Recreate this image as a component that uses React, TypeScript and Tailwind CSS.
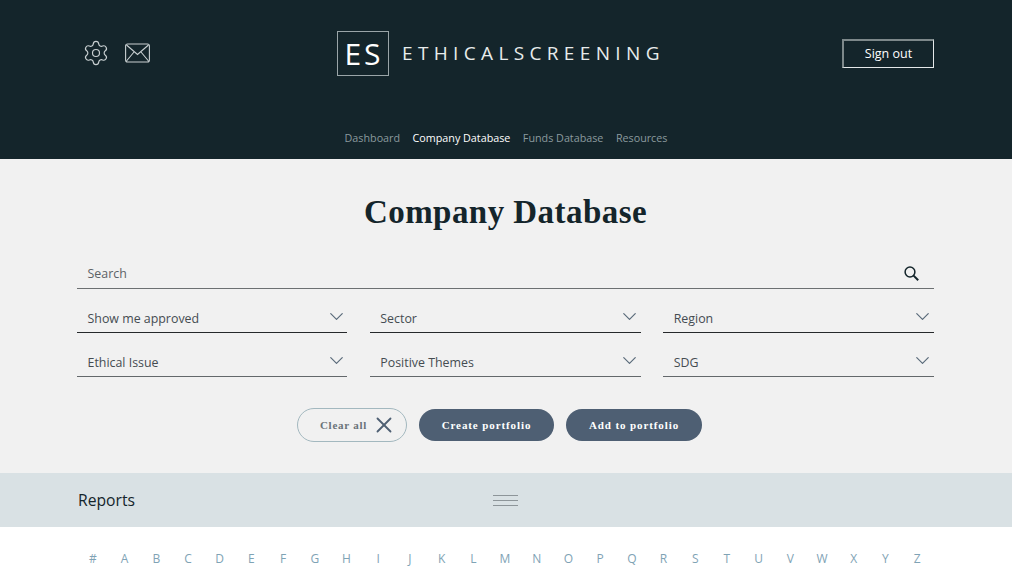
import { ChevronDown, Settings, X } from "lucide-react";

const LETTERS = "#ABCDEFGHIJKLMNOPQRSTUVWXYZ".split("");

const FILTERS = ["Show me approved", "Sector", "Region", "Ethical Issue", "Positive Themes", "SDG"];

const NAV = ["Dashboard", "Company Database", "Funds Database", "Resources"];

function MailIcon() {
  return (
    <svg width="25" height="20" viewBox="0 0 25 20" fill="none" stroke="#c9d0d2" strokeWidth="1.1">
      <rect x="0.6" y="1" width="23.8" height="18" rx="2" />
      <path d="M1.5 2l11 9.5L23.5 2M1.5 18l7.5-9M23.5 18l-7.5-9" />
    </svg>
  );
}

function SearchIcon() {
  return (
    <svg width="15" height="15" viewBox="0 0 15 15" fill="none" stroke="#14252b" className="-mt-[2px]">
      <circle cx="6" cy="6" r="4.9" strokeWidth="1.5" />
      <path d="M9.6 9.6L14.2 14.2" strokeWidth="2" />
    </svg>
  );
}

function Header() {
  return (
    <header className="h-[159px] bg-[#14252b] flex flex-col">
      <div className="relative flex items-start justify-between pl-[82px] pr-[78px] pt-[31px]">
        <div className="flex items-center gap-[15px] mt-[8px]">
          <Settings className="w-[28px] h-[28px] text-[#c9d0d2]" strokeWidth={1} />
          <MailIcon />
        </div>
        <div className="absolute left-[337px] top-[31px] flex items-center">
          <div className="w-[52px] h-[45px] border border-[#9aa5a8] flex items-center justify-center text-white text-[30px] tracking-[3px] pl-[2px] font-['Open_Sans',sans-serif]">
            ES
          </div>
          <span className="ml-[13px] text-[#e8ecec] text-[19px] tracking-[5.35px] font-['Open_Sans',sans-serif]">
            ETHICALSCREENING
          </span>
        </div>
        <button className="w-[92px] h-[29px] mt-[8px] border-t-2 border-l-2 border-r border-b border-t-[#7d888a] border-l-[#7d888a] border-r-[#e4e8e9] border-b-[#e4e8e9] text-white text-[12.5px] font-['Open_Sans',sans-serif]">
          Sign out
        </button>
      </div>
      <nav className="mt-auto mb-[13px] flex justify-center gap-[12.5px] text-[10.75px] leading-[16px] font-['Open_Sans',sans-serif]">
        {NAV.map((item) => (
          <a key={item} className={item === "Company Database" ? "text-white" : "text-[#8b9a9e]"}>
            {item}
          </a>
        ))}
      </nav>
    </header>
  );
}

function Filter({ label, dark }: { label: string; dark: boolean }) {
  return (
    <div
      className={
        dark
          ? "h-[44px] flex items-end justify-between border-b border-[#26292b] pl-[10.5px]"
          : "h-[44px] flex items-end justify-between border-b border-[#63686b] pl-[10.5px]"
      }
    >
      <span className="text-[12.4px] leading-[27px] text-[#454c51]">{label}</span>
      <ChevronDown className="w-[23px] h-[23px] mb-[4.5px] -mr-[0.5px] text-[#5a6a7a]" strokeWidth={1.25} />
    </div>
  );
}

export default function App() {
  return (
    <div className="w-[1012px] h-[572px] overflow-hidden bg-white font-['Open_Sans',sans-serif]">
      <Header />

      <main className="h-[314px] bg-[#f1f1f1] pl-[77px] pr-[78px] pt-[34px] flex flex-col">
        <h1 className="text-center text-[33px] leading-[38px] tracking-[0.45px] font-bold text-[#14252b] font-['Liberation_Serif',serif]">
          Company Database
        </h1>

        <div className="mt-[37px] h-[21px] flex items-start justify-between border-b border-[#6c7072] pl-[10.5px] pr-[15px]">
          <span className="text-[12.4px] leading-[12px] text-[#5c6266]">Search</span>
          <SearchIcon />
        </div>

        <div className="grid grid-cols-[270.4px_271px_270.8px] gap-x-[22.4px]">
          {FILTERS.map((f, i) => (
            <Filter key={f} label={f} dark={i < 3} />
          ))}
        </div>

        <div className="mt-[31px] mr-[12px] flex items-center justify-center gap-[12px] text-[11px] font-bold tracking-[0.9px] font-['Liberation_Serif',serif]">
          <button className="w-[110px] h-[34px] rounded-full border border-[#a3b8bf] text-[#6a7379] tracking-[0.75px] pl-[13px] flex items-center justify-center gap-[4px]">
            Clear all
            <X className="w-[26px] h-[26px] text-[#4e5f73]" strokeWidth={1.7} />
          </button>
          <button className="w-[135px] h-[32px] rounded-full bg-[#4e5f73] text-white">Create portfolio</button>
          <button className="w-[136px] h-[32px] rounded-full bg-[#4e5f73] text-white">Add to portfolio</button>
        </div>
      </main>

      <section className="relative h-[54px] bg-[#d9e1e4] px-[78px] pt-[1px] flex items-center">
        <h2 className="text-[15.7px] font-medium text-[#14252b]">Reports</h2>
        <div className="absolute left-[493px] top-[22px] w-[25px] flex flex-col gap-[4px]">
          <div className="h-px bg-[#8d9599]" />
          <div className="h-px bg-[#8d9599]" />
          <div className="h-px bg-[#8d9599]" />
        </div>
      </section>

      <div className="ml-[77px] mr-[79px] mt-[23px] grid grid-cols-[repeat(27,minmax(0,1fr))] text-[12px] leading-[18px] text-[#7fa3b5]">
        {LETTERS.map((l) => (
          <a key={l} className="text-center">
            {l}
          </a>
        ))}
      </div>
    </div>
  );
}
